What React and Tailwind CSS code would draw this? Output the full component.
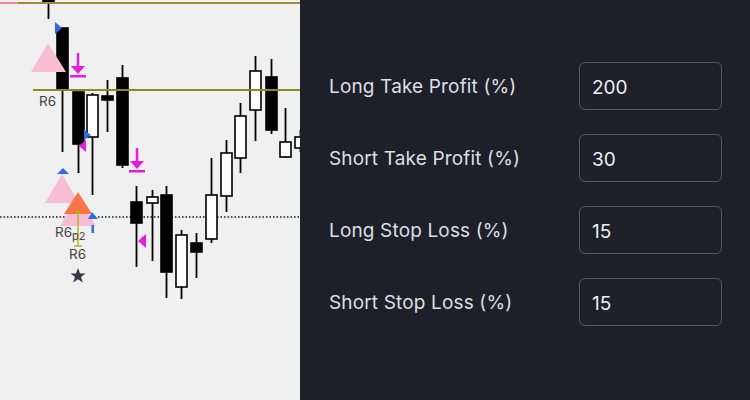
import React from 'react'

// candles: x = left edge of body, body top/bottom, wick top/bottom, filled = bearish
const candles = [
  { x: 43, bt: -2, bb: 3, wt: 0, wb: 19, filled: true },
  { x: 57, bt: 28, bb: 90, wt: 28, wb: 152, filled: true },
  { x: 73, bt: 92, bb: 144, wt: 92, wb: 173, filled: true },
  { x: 87, bt: 95, bb: 137, wt: 93, wb: 195, filled: false },
  { x: 102, bt: 96, bb: 100, wt: 80, wb: 132, filled: true },
  { x: 117, bt: 78, bb: 165, wt: 65, wb: 168, filled: true },
  { x: 131, bt: 202, bb: 223, wt: 186, wb: 267, filled: true },
  { x: 147, bt: 197, bb: 203, wt: 190, wb: 261, filled: false },
  { x: 161, bt: 195, bb: 272, wt: 186, wb: 298, filled: true },
  { x: 176, bt: 235, bb: 287, wt: 230, wb: 299, filled: false },
  { x: 191, bt: 243, bb: 252, wt: 233, wb: 278, filled: true },
  { x: 206, bt: 195, bb: 239, wt: 158, wb: 243, filled: false },
  { x: 221, bt: 153, bb: 196, wt: 140, wb: 212, filled: false },
  { x: 235, bt: 116, bb: 158, wt: 103, wb: 173, filled: false },
  { x: 250, bt: 71, bb: 110, wt: 56, wb: 141, filled: false },
  { x: 266, bt: 77, bb: 130, wt: 59, wb: 134, filled: true },
  { x: 280, bt: 142, bb: 157, wt: 108, wb: 158, filled: false },
  { x: 295, bt: 137, bb: 148, wt: 130, wb: 152, filled: false },
]

const fields = [
  { label: 'Long Take Profit (%)', value: '200' },
  { label: 'Short Take Profit (%)', value: '30' },
  { label: 'Long Stop Loss (%)', value: '15' },
  { label: 'Short Stop Loss (%)', value: '15' },
]

function DownArrow({ x, y }) {
  return (
    <g fill="#e21ee2" stroke="none">
      <rect x={x - 1.25} y={y} width="2.5" height="15" />
      <polygon points={`${x - 7},${y + 13} ${x + 7},${y + 13} ${x},${y + 21}`} />
      <rect x={x - 8} y={y + 22} width="16" height="2.5" />
    </g>
  )
}

function Chart() {
  const w = 11
  return (
    <svg width="300" height="400" viewBox="0 0 300 400" className="block">
      {/* dotted level */}
      <line x1="0" y1="217" x2="300" y2="217" stroke="#111" strokeWidth="1.5" strokeDasharray="1.5 2" />

      {candles.map((c, i) => {
        const cx = c.x + w / 2
        return (
          <g key={i}>
            <line x1={cx} y1={c.wt} x2={cx} y2={c.wb} stroke="#000" strokeWidth="1.8" />
            <rect
              x={c.x}
              y={c.bt}
              width={w}
              height={c.bb - c.bt}
              fill={c.filled ? '#000' : '#fff'}
              stroke="#000"
              strokeWidth="1.6"
            />
          </g>
        )
      })}

      {/* levels */}
      <line x1="0" y1="3" x2="18" y2="3" stroke="#f08c8c" strokeWidth="2" />
      <line x1="18" y1="3" x2="300" y2="3" stroke="#a08a3a" strokeWidth="2" />
      <line x1="33" y1="90" x2="300" y2="90" stroke="#8e8a1c" strokeWidth="2" />

      {/* upper markers */}
      <polygon points="55,22 62,28 55,34" fill="#2f6be3" />
      <polygon points="48,43 31,72 66,72" fill="#f8bdd5" />
      <DownArrow x={78} y={53} />
      <text x="39" y="106" fontSize="13.5" fill="#444" fontFamily="Inter, sans-serif">R6</text>

      <polygon points="84,130 91,135 84,140" fill="#2f6be3" />
      <polygon points="79,146 86,140 86,152" fill="#e21ee2" />
      <DownArrow x={137} y={148} />
      <polygon points="138,241 146,234 146,248" fill="#e21ee2" />

      {/* lower cluster */}
      <polygon points="63,168 57,174 69,174" fill="#2f6be3" />
      <polygon points="62,174 45,203 79,203" fill="#f8bdd5" />
      <polygon points="78,196 60,226 96,226" fill="#f8bdd5" />
      <polygon points="78,192 64,214 92,214" fill="#fa7646" />
      <polygon points="92,212 88,219 98,219" fill="#2f6be3" />
      <rect x="91.5" y="225" width="2.5" height="8" fill="#2f6be3" />
      <line x1="78" y1="212" x2="78" y2="246" stroke="#b8b224" strokeWidth="1.5" />
      <circle cx="78" cy="212" r="2" fill="#b8b224" />
      <line x1="74" y1="246" x2="82" y2="246" stroke="#b8b224" strokeWidth="1.5" />
      <text x="55" y="237" fontSize="13.5" fill="#444" fontFamily="Inter, sans-serif">
        R6<tspan fontSize="11" dy="3">p2</tspan>
      </text>
      <text x="69" y="259" fontSize="13.5" fill="#444" fontFamily="Inter, sans-serif">R6</text>
      <polygon
        points="78,268 80,273.5 85.5,273.5 81,277 82.8,282.5 78,279.2 73.2,282.5 75,277 70.5,273.5 76,273.5"
        fill="#333a46"
      />
    </svg>
  )
}

export default function App() {
  return (
    <div className="flex w-[750px] h-[400px] overflow-hidden" style={{ fontFamily: 'Inter, "Noto Sans", sans-serif' }}>
      <div className="w-[300px] h-full bg-[#f0f0f0] overflow-hidden shrink-0">
        <Chart />
      </div>

      <div className="flex-1 h-full bg-[#1e2029] pl-[29px] pr-[28px] pt-[62px] flex flex-col gap-6">
        {fields.map((f) => (
          <div key={f.label} className="flex items-center justify-between h-12">
            <span className="text-[19px] text-[#dcdfe4] tracking-[0.15px] pt-[2px]">{f.label}</span>
            <input
              type="text"
              defaultValue={f.value}
              className="w-[143px] h-12 rounded-md border-[1.5px] border-[#555862] bg-transparent px-3 pt-[2px] text-[19px] text-[#eceef1] outline-none"
            />
          </div>
        ))}
      </div>
    </div>
  )
}
